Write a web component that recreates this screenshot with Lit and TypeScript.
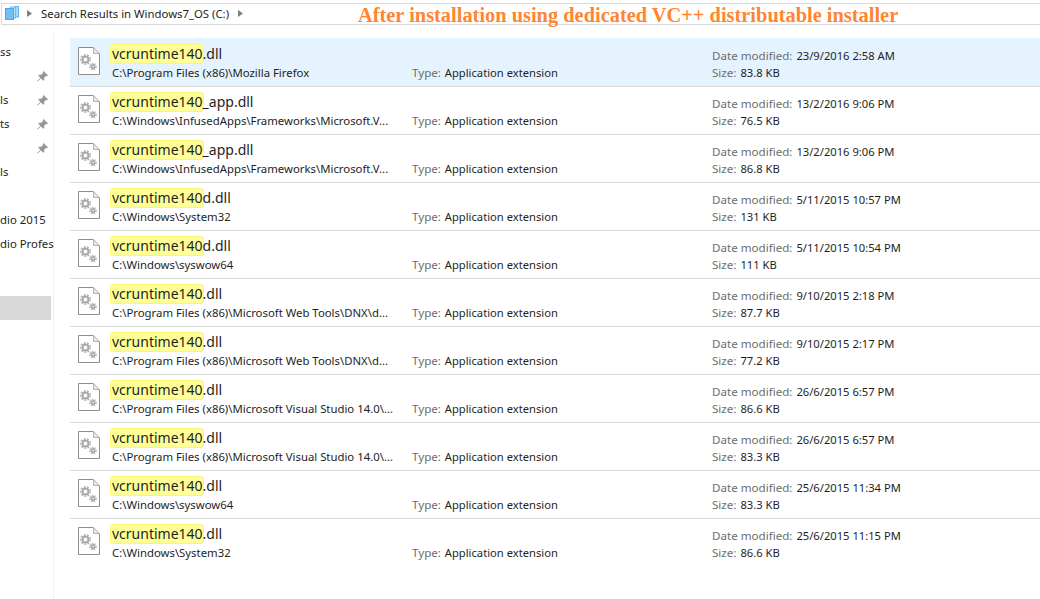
import { LitElement, html, css, svg } from "lit";
import { customElement } from "lit/decorators.js";

interface Row { pre: string; post: string; path: string; date: string; size: string; sel?: boolean }

const ROWS: Row[] = [
  { pre: "vcruntime140", post: ".dll", path: "C:\\Program Files (x86)\\Mozilla Firefox", date: "23/9/2016 2:58 AM", size: "83.8 KB", sel: true },
  { pre: "vcruntime140", post: "_app.dll", path: "C:\\Windows\\InfusedApps\\Frameworks\\Microsoft.V...", date: "13/2/2016 9:06 PM", size: "76.5 KB" },
  { pre: "vcruntime140", post: "_app.dll", path: "C:\\Windows\\InfusedApps\\Frameworks\\Microsoft.V...", date: "13/2/2016 9:06 PM", size: "86.8 KB" },
  { pre: "vcruntime140", post: "d.dll", path: "C:\\Windows\\System32", date: "5/11/2015 10:57 PM", size: "131 KB" },
  { pre: "vcruntime140", post: "d.dll", path: "C:\\Windows\\syswow64", date: "5/11/2015 10:54 PM", size: "111 KB" },
  { pre: "vcruntime140", post: ".dll", path: "C:\\Program Files (x86)\\Microsoft Web Tools\\DNX\\d...", date: "9/10/2015 2:18 PM", size: "87.7 KB" },
  { pre: "vcruntime140", post: ".dll", path: "C:\\Program Files (x86)\\Microsoft Web Tools\\DNX\\d...", date: "9/10/2015 2:17 PM", size: "77.2 KB" },
  { pre: "vcruntime140", post: ".dll", path: "C:\\Program Files (x86)\\Microsoft Visual Studio 14.0\\...", date: "26/6/2015 6:57 PM", size: "86.6 KB" },
  { pre: "vcruntime140", post: ".dll", path: "C:\\Program Files (x86)\\Microsoft Visual Studio 14.0\\...", date: "26/6/2015 6:57 PM", size: "83.3 KB" },
  { pre: "vcruntime140", post: ".dll", path: "C:\\Windows\\syswow64", date: "25/6/2015 11:34 PM", size: "83.3 KB" },
  { pre: "vcruntime140", post: ".dll", path: "C:\\Windows\\System32", date: "25/6/2015 11:15 PM", size: "86.6 KB" },
];

const NAV: { t: string; pin?: boolean }[] = [
  { t: "ss" }, { t: "", pin: true }, { t: "ls", pin: true }, { t: "ts", pin: true }, { t: "", pin: true },
  { t: "ls" }, { t: "" }, { t: "dio 2015" }, { t: "dio Profes" },
];

const gear = (cx: number, cy: number, r: number, w: number, tw: number, dash: string) => svg`
  <circle cx=${cx} cy=${cy} r=${r} fill="none" stroke="#a4a9ad" stroke-width=${w}></circle>
  <circle cx=${cx} cy=${cy} r=${r + w / 2 + tw / 2 - 0.2} fill="none" stroke="#b0b5b9" stroke-width=${tw} stroke-dasharray=${dash}></circle>`;

const fileIcon = html`<svg class="file" width="22" height="28" viewBox="0 0 22 28">
  <path d="M.5.5H15.5L21.5 6.5V27.5H.5Z" fill="#fff" stroke="#8e8e8e"></path>
  <path d="M15.5.5V6.5H21.5Z" fill="#e8e8e8" stroke="#b0b0b0"></path>
  ${gear(7.5, 12.5, 3, 2, 1.8, "1.8 1.5")}
  ${gear(15, 19.5, 1.7, 1.8, 1.4, "1.4 1.2")}
</svg>`;

const pin = html`<svg class="pin" width="11" height="11" viewBox="0 0 11 11">
  <path d="M6.6 0 11 4.4 10 5.2 9.2 4.8 7.2 6.8 7.2 8.9 6.2 9.7 3.9 7.2.8 10.6 0 10.2 3.4 6.7 1.2 4.6 2.1 3.7 4.2 3.8 6.2 1.8 5.8 1Z" fill="#8f979d"></path>
</svg>`;

const folder = html`<svg class="folder" width="14" height="14" viewBox="0 0 14 14">
  <rect x="9.5" y="0.5" width="4" height="10.5" fill="#a5d8fa" stroke="#5fb4ee"></rect>
  <rect x="5.5" y="1" width="5" height="11" fill="#bfe4fb" stroke="#6dbcf0"></rect>
  <rect x="0.5" y="2.5" width="8" height="11" fill="#72bef5" stroke="#4aa5ea"></rect>
</svg>`;

const chevron = html`<svg class="chev" width="5" height="7" viewBox="0 0 5 7"><path d="M0 0 5 3.5 0 7Z" fill="#808080"></path></svg>`;

@customElement("app-root")
export class AppRoot extends LitElement {
  static styles = css`
    :host {
      display: block;
      position: relative;
      width: 1040px;
      height: 599px;
      overflow: hidden;
      background: #fff;
      font-family: "Noto Sans", "Open Sans", sans-serif;
      color: #1a1a1a;
    }
    .addr {
      display: flex;
      align-items: center;
      box-sizing: border-box;
      height: 22px;
      margin: 3px 0 0 1px;
      padding-bottom: 2px;
      border: 1px solid #d9d9d9;
      border-right: none;
      font-size: 11.35px;
      color: #1e1e1e;
    }
    .folder { margin-left: 3px; margin-right: 8px; }
    .crumb { margin: 0 9px; white-space: nowrap; }
    .title {
      position: absolute;
      left: 358px;
      top: 4px;
      font: bold 20.4px "Liberation Serif", serif;
      color: #ff8533;
      white-space: nowrap;
    }
    .main {
      display: flex;
      height: 574px;
    }
    .nav {
      box-sizing: border-box;
      width: 54px;
      flex: none;
      margin-top: 7px;
      padding-top: 8px;
      border-right: 1px solid #f0f0f0;
      display: flex;
      flex-direction: column;
      font-size: 11.35px;
    }
    .nav-item {
      position: relative;
      height: 24px;
      line-height: 24px;
      white-space: nowrap;
      color: #1e1e1e;
    }
    .pin { position: absolute; left: 37px; top: 7px; }
    .band {
      width: 51px;
      height: 24px;
      margin-top: 40px;
      background: #d9d9d9;
    }
    .list {
      flex: 1;
      padding: 14px 0 0 16px;
    }
    .row {
      box-sizing: border-box;
      height: 48px;
      display: grid;
      grid-template-columns: 342px 300px 1fr;
      border-bottom: 1px solid #d9d9d9;
    }
    .row.sel { background: #e5f3ff; box-shadow: 0 -1px 0 #e5f3ff; }
    .row.last { border-bottom: none; }
    .name-col {
      display: grid;
      grid-template-columns: 40px 1fr;
    }
    .file { margin: 8px 0 0 8px; }
    .name {
      font-size: 14px;
      line-height: 19px;
      margin-top: 5px;
      color: #1e1e1e;
      white-space: nowrap;
    }
    mark {
      display: inline-block;
      box-sizing: border-box;
      height: 20px;
      background: #ffff99;
      color: inherit;
      border: 1px solid #f6f67a;
      border-radius: 3px;
      padding: 0 0 0 1px;
      margin-right: -1px;
      line-height: 18px;
    }
    .path {
      font-size: 11.35px;
      line-height: 16px;
      margin: 1px 0 0 2px;
      white-space: nowrap;
      color: #1e1e1e;
    }
    .type, .meta { font-size: 11.2px; line-height: 16px; color: #1e1e1e; }
    .type { padding-top: 26px; }
    .meta { padding-top: 9px; display: flex; flex-direction: column; gap: 1px; }
    .lbl { color: #6d6d6d; font-size: 11.6px; margin-right: 1px; }
  `;

  render() {
    return html`
      <div class="addr">${folder}${chevron}<span class="crumb">Search Results in Windows7_OS (C:)</span>${chevron}</div>
      <div class="title">After installation using dedicated VC++ distributable installer</div>
      <div class="main">
        <nav class="nav">
          ${NAV.map((n) => html`<div class="nav-item">${n.t}${n.pin ? pin : ""}</div>`)}
          <div class="band"></div>
        </nav>
        <div class="list">
          ${ROWS.map(
            (r, i) => html`<div class="row ${r.sel ? "sel" : ""} ${i === ROWS.length - 1 ? "last" : ""}">
              <div class="name-col">
                ${fileIcon}
                <div>
                  <div class="name"><mark>${r.pre}</mark>${r.post}</div>
                  <div class="path">${r.path}</div>
                </div>
              </div>
              <div class="type"><span class="lbl">Type:</span> Application extension</div>
              <div class="meta">
                <div><span class="lbl">Date modified:</span> ${r.date}</div>
                <div><span class="lbl">Size:</span> ${r.size}</div>
              </div>
            </div>`
          )}
        </div>
      </div>
    `;
  }
}
